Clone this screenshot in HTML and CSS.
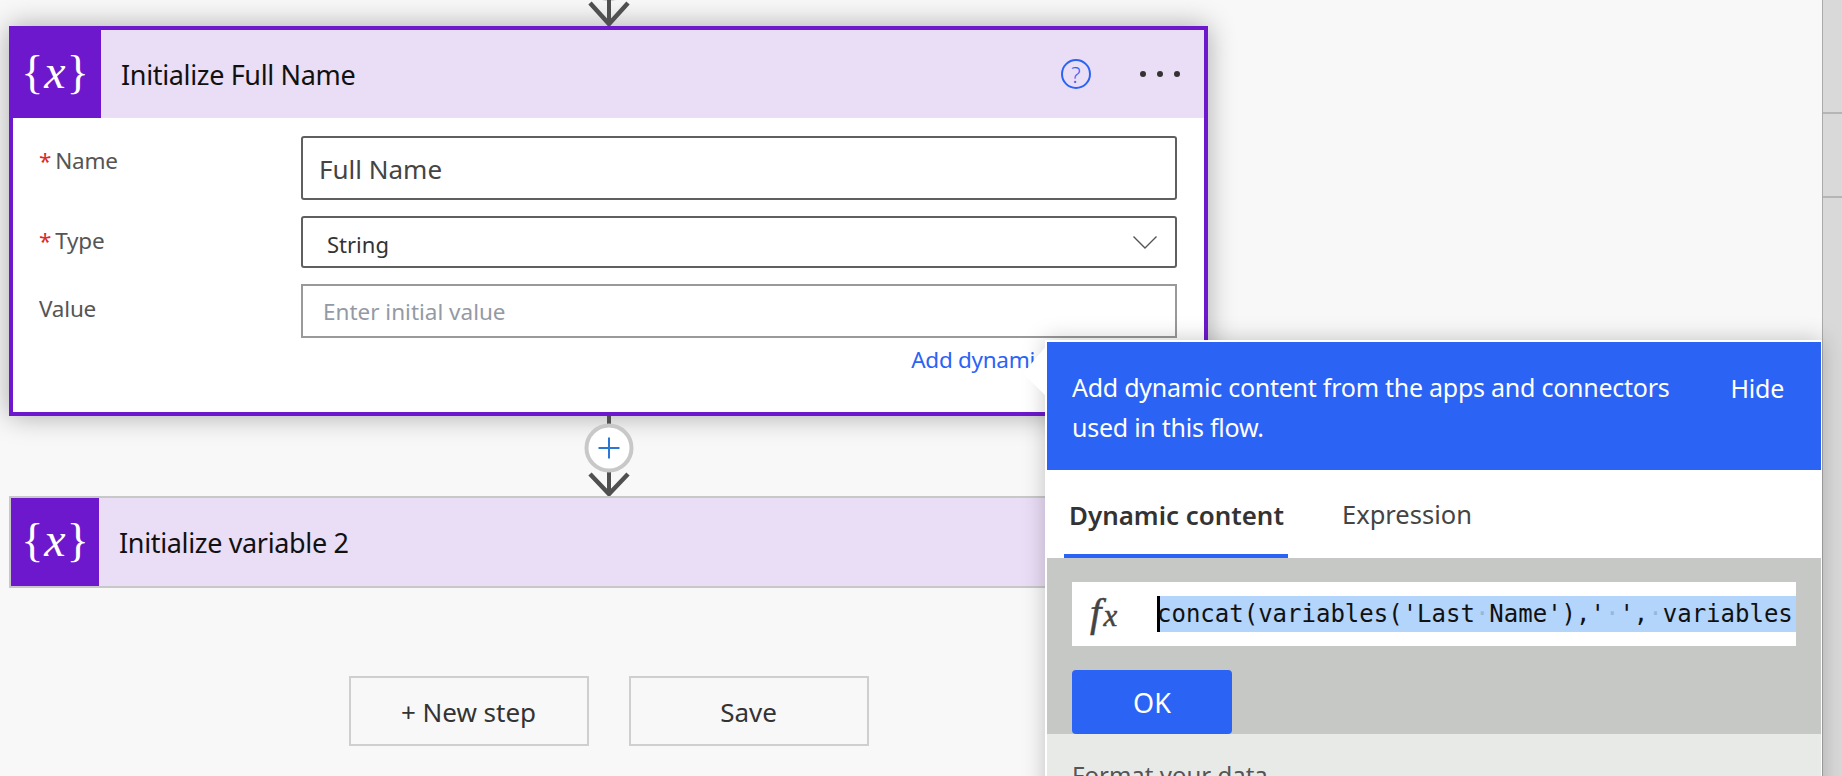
FILE: index.html
```html
<!DOCTYPE html>
<html>
  <head>
    <title>Initialize Full Name</title>
    <meta http-equiv="Content-Type" content="text/html; charset=UTF-8"/>
    <link rel="stylesheet" href="styles.css">
  </head>
  <body>
    <div class="page">
      <main class="canvas">
        <svg class="arrow-top" width="1199" height="26" viewBox="0 0 1199 26">
          <circle cx="600" cy="-23" r="22" fill="#fff" stroke="#c8c8c8" stroke-width="4"/>
          <path d="M600 0V24" stroke="#505050" stroke-width="4" fill="none"/>
          <path d="M581 3L600 24L619 3" stroke="#505050" stroke-width="4.5" fill="none"/>
        </svg>

        <section class="card card-open">
          <header class="card-head">
            <div class="card-icon"><span>{</span><i>x</i><span>}</span></div>
            <h2 class="card-title">Initialize Full Name</h2>
            <span class="help">?</span>
            <span class="dots"><b></b><b></b><b></b></span>
          </header>
          <div class="card-body">
            <div class="form">
              <label class="field-label"><em>*</em>Name</label>
              <div class="input input-name">Full Name</div>
              <label class="field-label"><em>*</em>Type</label>
              <div class="input input-type">
                <span>String</span>
                <svg width="24" height="13" viewBox="0 0 24 13"><path d="M.5 .5L12 12L23.5 .5" stroke="#555" stroke-width="1.4" fill="none"/></svg>
              </div>
              <label class="field-label">Value</label>
              <div class="input input-value">Enter initial value</div>
            </div>
            <div class="add-link">Add dynamic content</div>
          </div>
        </section>

        <svg class="connector" width="1199" height="80" viewBox="0 0 1199 80">
          <path d="M600 0V77" stroke="#505050" stroke-width="4" fill="none"/>
          <path d="M581 58L600 78L619 58" stroke="#505050" stroke-width="4.5" fill="none"/>
          <circle cx="600" cy="32" r="22.5" fill="#fff" stroke="#c8c8c8" stroke-width="4"/>
          <path d="M589.5 32H610.5M600 21.5V42.5" stroke="#2b78d4" stroke-width="2" fill="none"/>
        </svg>

        <section class="card card-closed">
          <header class="card-head">
            <div class="card-icon"><span>{</span><i>x</i><span>}</span></div>
            <h2 class="card-title">Initialize variable 2</h2>
          </header>
        </section>

        <div class="actions">
          <button class="btn">+ New step</button>
          <button class="btn">Save</button>
        </div>
      </main>

      <aside class="strip">
        <div class="strip-cell strip-one"></div>
        <div class="strip-cell strip-two"></div>
      </aside>

      <div class="flyout">
        <div class="beak"></div>
        <div class="fly-head">
          <p>Add dynamic content from the apps and connectors used in this flow.</p>
          <span class="hide">Hide</span>
        </div>
        <div class="tabs">
          <span class="tab tab-active">Dynamic content</span>
          <span class="tab">Expression</span>
        </div>
        <div class="expr">
          <div class="expr-input">
            <span class="fx">f<small>x</small></span>
            <div class="sel">concat(variables('Last<u>·</u>Name'),'<u>·</u>',<u>·</u>variables</div>
          </div>
          <button class="ok">OK</button>
        </div>
        <div class="format">Format your data</div>
      </div>
    </div>
  </body>
</html>
```

FILE: styles.css
```css
* {
  box-sizing: border-box;
}

body {
  margin: 0;
  font-family: 'Noto Sans', 'Open Sans', sans-serif;
  color: #333;
}

.page {
  position: relative;
  display: flex;
  height: 776px;
  overflow: hidden;
  background-color: #f8f8f8;
}

.canvas {
  flex: 1;
  padding-left: 9px;
}

.arrow-top,
.connector {
  display: block;
}

/* cards */
.card {
  width: 1199px;
  background-color: #fff;
}

.card-open {
  height: 390px;
  border: 4px solid #6d18cc;
  box-shadow: 0 0 26px rgba(0, 0, 0, 0.32);
}

.card-closed {
  height: 92px;
  border: 2px solid #c8c8c8;
  background-color: #eaddf6;
}

.card-head {
  display: flex;
  align-items: center;
  height: 88px;
  background-color: #eaddf6;
}

.card-icon {
  display: flex;
  align-items: center;
  justify-content: center;
  align-self: stretch;
  background-color: #6d18cc;
  color: #fff;
  font-family: 'Liberation Serif', serif;
  font-size: 46px;
}

.card-icon span {
  margin-top: -4px;
}

.card-icon i {
  margin: -6px 1px 0;
  font-size: 48px;
}

.card-open .card-icon {
  width: 92px;
  height: 92px;
  margin: -4px 0 0 -4px;
  padding-top: 4px;
}

.card-closed .card-icon {
  width: 88px;
}

.card-title {
  flex: 1;
  margin: 0;
  padding-left: 20px;
  color: #111;
  font-size: 27px;
  font-weight: 400;
  letter-spacing: -0.35px;
}

.help {
  display: flex;
  align-items: center;
  justify-content: center;
  width: 30px;
  height: 30px;
  margin-right: 49px;
  border: 2px solid #2b63f5;
  border-radius: 50%;
  color: #2b63f5;
  font-size: 22px;
  font-weight: 300;
}

.dots {
  display: flex;
  gap: 11px;
  margin-right: 24px;
}

.dots b {
  width: 6px;
  height: 6px;
  border-radius: 50%;
  background-color: #333;
}

/* form */
.card-body {
  padding: 18px 27px 0 26px;
}

.form {
  display: grid;
  grid-template-columns: 262px 1fr;
  row-gap: 16px;
}

.field-label {
  padding-top: 9px;
  color: #555;
  font-size: 22.5px;
  letter-spacing: -0.2px;
}

.field-label em {
  margin-right: 4px;
  color: #e02b2b;
  font-style: normal;
}

.input {
  display: flex;
  align-items: center;
  border: 2px solid #5f5f5f;
  border-radius: 3px;
  background-color: #fff;
  color: #444;
}

.input-name {
  height: 64px;
  padding: 2px 0 0 16px;
  font-size: 26px;
}

.input-type {
  justify-content: space-between;
  height: 52px;
  padding: 3px 18px 0 24px;
  font-size: 22px;
  color: #333;
}

.input-type svg {
  margin-top: -3px;
}

.input-value {
  height: 54px;
  padding-left: 20px;
  border-color: #999;
  border-radius: 0;
  color: #949aa5;
  font-size: 22.5px;
}

.add-link {
  margin-top: 6px;
  padding-right: 47px;
  color: #2b63f5;
  font-size: 22.5px;
  letter-spacing: -0.3px;
  text-align: right;
}

.actions {
  display: flex;
  gap: 40px;
  justify-content: center;
  width: 1199px;
  margin-top: 88px;
}

.btn {
  width: 240px;
  height: 70px;
  padding: 2px 0 0;
  border: 2px solid #cfcfcf;
  background-color: #f8f8f8;
  color: #333;
  font-family: inherit;
  font-size: 26px;
}

/* right edge */
.strip {
  width: 20px;
  border-left: 1px solid #aaa;
  background-color: #d9d9d9;
}

.strip-cell {
  border-bottom: 2px solid #b5b5b5;
}

.strip-one {
  height: 114px;
}

.strip-two {
  height: 84px;
}

/* dynamic content flyout */
.flyout {
  position: absolute;
  top: 340px;
  left: 1045px;
  width: 777px;
  height: 500px;
  border: 2px solid #fff;
  border-right-width: 1px;
  background-color: #e8eae8;
  box-shadow: 0 0 22px rgba(0, 0, 0, 0.22);
}

.beak {
  position: absolute;
  top: 3px;
  left: -24px;
  width: 24px;
  height: 52px;
  background-color: #fff;
  clip-path: polygon(100% 0, 0 55%, 100% 100%);
}

.fly-head {
  display: flex;
  justify-content: space-between;
  align-items: flex-start;
  height: 128px;
  padding: 25px 37px 0 25px;
  background-color: #2b63f5;
  color: #fff;
  font-size: 25px;
  letter-spacing: -0.25px;
}

.fly-head p {
  width: 625px;
  margin: 0;
  line-height: 40px;
}

.hide {
  margin-top: 1px;
  line-height: 40px;
}

.tabs {
  display: flex;
  gap: 49px;
  height: 88px;
  padding-left: 17px;
  background-color: #fff;
  font-size: 25.5px;
}

.tab {
  height: 88px;
  padding: 27px 5px 0;
  color: #444;
}

.tab-active {
  width: 224px;
  border-bottom: 4px solid #2b63f5;
  color: #333;
  font-size: 25.9px;
  font-weight: 600;
  white-space: nowrap;
}

.expr {
  height: 176px;
  padding: 24px 25px 0;
  background-color: #c6c8c6;
}

.expr-input {
  display: flex;
  align-items: center;
  height: 64px;
  padding-left: 15px;
  background-color: #fff;
}

.fx {
  width: 70px;
  padding-left: 3px;
  color: #444;
  font-family: 'Liberation Serif', serif;
  font-size: 41px;
  font-style: italic;
  line-height: 36px;
  -webkit-text-stroke: 0.5px #444;
}

.fx small {
  margin-left: 2px;
  font-size: 31px;
}

.sel {
  flex: 1;
  height: 36px;
  background-color: #b3d4fb;
  box-shadow: inset 3px 0 0 #000;
  color: #111;
  font-family: 'DejaVu Sans Mono', monospace;
  font-size: 24px;
  line-height: 36px;
  white-space: nowrap;
}

.sel u {
  color: #94b8dd;
  text-decoration: none;
}

.ok {
  display: block;
  width: 160px;
  height: 64px;
  margin-top: 24px;
  border: 0;
  border-radius: 4px;
  background-color: #2b63f5;
  color: #fff;
  font-family: inherit;
  font-size: 27px;
}

.format {
  padding: 24px 0 0 25px;
  color: #555;
  font-size: 24px;
}
```
